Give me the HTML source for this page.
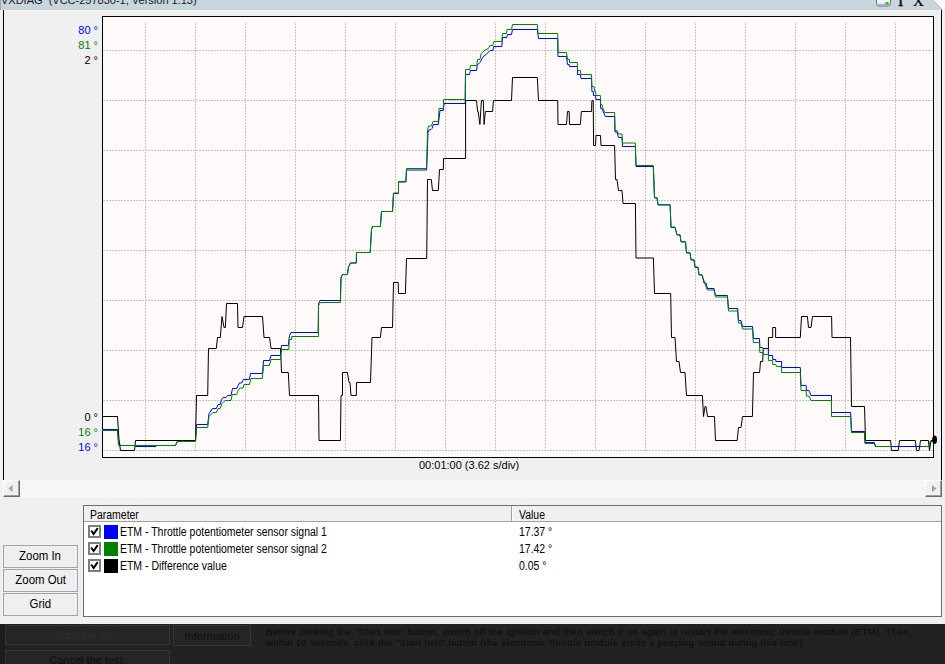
<!DOCTYPE html>
<html><head><meta charset="utf-8">
<style>
*{margin:0;padding:0;box-sizing:border-box}
html,body{width:945px;height:664px;overflow:hidden;background:#f0f0f0;font-family:"Liberation Sans",sans-serif;}
.a{position:absolute}
#title{left:0;top:0;width:945px;height:10px;background:#c9d5dd;overflow:hidden}
#title .t{position:absolute;left:1px;top:-5px;font-size:11px;line-height:11px;color:#1a1a1a;white-space:nowrap}
.lbl{position:absolute;font-size:11px;line-height:13px;white-space:nowrap;text-align:right;width:60px}
.btn{position:absolute;left:3px;width:75px;height:23px;border:1px solid #a3a3a3;background:#efefef;font-size:12px;line-height:21px;text-align:center;color:#000}
.btn span{display:inline-block;transform:scaleX(0.95)}
.tt{position:absolute;font-size:11px;line-height:13px;white-space:nowrap;color:#000}
.tb{position:absolute;font-size:12px;line-height:13px;white-space:nowrap;color:#000;transform:scaleX(0.872);transform-origin:0 0}
.cb{position:absolute;left:88px;width:13px;height:13px;border:2px solid #7e7e7e;background:#fff}
.sq{position:absolute;left:104px;width:14px;height:14px}
.dk{position:absolute;font-size:11px;white-space:nowrap}
</style></head><body>
<div id="title" class="a"><div class="a" style="left:0;top:0;width:1px;height:10px;background:#a8a8a8"></div><div class="t">VXDIAG &nbsp;(VCC-257830-1, Version 1.13)</div></div>
<svg class="a" style="left:0;top:0" width="945" height="14"><path d="M933 0 L945 0 L945 10 L943 10 Z" fill="#fdfdfd"/><path d="M933 0 L943 10" stroke="#a8a8a8" stroke-width="1" stroke-dasharray="1 0.5"/></svg>
<div class="a" style="left:3px;top:10px;width:1px;height:470px;background:#000"></div>
<div class="a" style="left:941px;top:10px;width:1px;height:470px;background:#000"></div>

<div class="lbl" style="left:38px;top:24px;color:#0000ff">80 °</div>
<div class="lbl" style="left:38px;top:39px;color:#008000">81 °</div>
<div class="lbl" style="left:38px;top:54px;color:#000">2 °</div>
<div class="lbl" style="left:38px;top:411px;color:#000">0 °</div>
<div class="lbl" style="left:38px;top:426px;color:#008000">16 °</div>
<div class="lbl" style="left:38px;top:441px;color:#0000ff">16 °</div>
<div class="tt" style="left:419px;top:459px">00:01:00 (3.62 s/div)</div>

<svg class="a" style="left:0;top:0" width="945" height="664" viewBox="0 0 945 664">
<rect x="102" y="16" width="832" height="442" fill="#fdfaf9"/>
<g stroke="#c4c4c4" stroke-width="1" stroke-dasharray="2 1" shape-rendering="crispEdges">
<line x1="103" y1="50.5" x2="933" y2="50.5"/>
<line x1="103" y1="100.5" x2="933" y2="100.5"/>
<line x1="103" y1="150.5" x2="933" y2="150.5"/>
<line x1="103" y1="200.5" x2="933" y2="200.5"/>
<line x1="103" y1="250.5" x2="933" y2="250.5"/>
<line x1="103" y1="300.5" x2="933" y2="300.5"/>
<line x1="103" y1="350.5" x2="933" y2="350.5"/>
<line x1="103" y1="400.5" x2="933" y2="400.5"/>
<line x1="103" y1="450.5" x2="933" y2="450.5"/>
<line x1="145.5" y1="23" x2="145.5" y2="451"/>
<line x1="195.5" y1="23" x2="195.5" y2="451"/>
<line x1="245.5" y1="23" x2="245.5" y2="451"/>
<line x1="295.5" y1="23" x2="295.5" y2="451"/>
<line x1="345.5" y1="23" x2="345.5" y2="451"/>
<line x1="395.5" y1="23" x2="395.5" y2="451"/>
<line x1="445.5" y1="23" x2="445.5" y2="451"/>
<line x1="495.5" y1="23" x2="495.5" y2="451"/>
<line x1="545.5" y1="23" x2="545.5" y2="451"/>
<line x1="595.5" y1="23" x2="595.5" y2="451"/>
<line x1="645.5" y1="23" x2="645.5" y2="451"/>
<line x1="695.5" y1="23" x2="695.5" y2="451"/>
<line x1="745.5" y1="23" x2="745.5" y2="451"/>
<line x1="795.5" y1="23" x2="795.5" y2="451"/>
<line x1="845.5" y1="23" x2="845.5" y2="451"/>
<line x1="895.5" y1="23" x2="895.5" y2="451"/>
</g>
<rect x="102.5" y="16.5" width="831" height="441" fill="none" stroke="#000" stroke-width="1" shape-rendering="crispEdges"/>
<g fill="none" stroke-width="1.0" stroke-linejoin="miter" stroke-miterlimit="2">
<polyline stroke="#0000ff" points="102,429.5 117.5,429.5 119,443 120.5,445.5 135,445.5 135.5,446.5 156,446.5 156.5,445.5 175.5,445.5 177,441.5 195.5,441.5 196.5,424.5 207.7,424.5 209,413.5 212.5,408.5 216.3,408.5 218,404.5 220.2,404.5 221.5,399.5 223,397.5 225.9,397.5 227.5,395.5 231,395.5 232.5,388.5 236.7,388.5 238,385.5 239.5,383 241.7,383 243.5,379.5 249.4,379.5 250.5,373.5 262.5,373.5 263.5,360.5 269.6,360.5 271,355.5 280.3,355.5 281.5,345.5 288.3,345.5 289.5,335.5 291,332.5 318.1,332.5 318.5,303.5 320,300.5 340.4,300.5 341,278 342.5,274.5 347.4,274.5 348.5,267 350.5,263 356.3,263 356.5,252.5 370.2,252.5 371.5,229.5 372.5,226.5 380.4,226.5 381.5,211.5 392.5,211.5 393.5,193.5 398.5,193.5 398.5,182 405.9,182 406.5,170 426.6,170 428,132.5 429,130 431,129.5 432,128.5 433.5,124.5 438.3,124.5 440,110.5 443.3,110.5 444,103.5 465.2,103.5 465.5,74.5 469.6,74.5 470.3,70.5 476.6,70.5 477.2,65 480.5,62 482,58.5 484,56 486.5,54 489.2,51.5 490.1,50.5 492.8,50.5 493.7,46.5 501.8,46.5 502.5,37.5 506.8,37.5 507.5,34.5 511.5,34.5 512.5,29.5 537.3,29.5 538.5,38.5 557.7,38.5 558,56.5 566.5,56.5 567.5,64.5 569.2,64.5 569.5,66.5 577.4,66.5 577.6,74.5 580.3,74.5 581,78.5 591.5,78.5 591.9,91.5 593.2,91.5 593.6,95.5 595.5,95.5 596,99.5 600.4,99.5 600.7,108.5 602,108.5 602.7,110.5 605.4,116.5 614.6,116.5 615,132 617,132 618.5,137.5 622,137.5 622.5,146.5 635.3,146.5 636,166.5 653.3,166.5 654.5,198 657,198 658,205 670.1,205 671,227.5 675,227.5 677,235 680,235 681,242 685.5,242 686.5,253 690,253 691,260 694,260 695,267.5 698,267.5 699,275 702,275 704,283 706,283 707.5,288.5 714,288.5 715.5,295.5 727.4,295.5 728.5,308.5 737.6,308.5 738.5,320.5 741,320.5 742.5,326.5 752.5,326.5 753.5,338.5 759.5,338.5 759.8,347.5 762.7,347.5 763.2,348.5 768.4,348.5 768.4,355.5 772.7,355.5 772.7,359.5 775.8,359.5 775.8,361.5 781.6,361.5 781.6,367.5 800.3,367.5 801,385.5 806.1,385.5 806.5,390.5 809,390.5 811,395.5 831.5,395.5 831.5,412.5 850.6,412.5 851.5,431.5 864.5,431.5 865,442.5 874.4,442.5 875.5,446.5 922,446.5"/>
<polyline stroke="#000" points="102,416.5 117.5,416.5 119,440 120.5,450.5 134.5,450.5 135.5,440.5 195.5,440.5 196.5,395.5 207.7,395.5 208.5,348.5 216.3,348.5 217.5,337.5 220.3,337.5 222,316.5 224,327.5 225.4,327.5 226.5,303.5 237.5,303.5 238,327.5 242.5,327.5 244,316.5 262.5,316.5 264,337.5 269.6,337.5 271,348.5 280.6,348.5 281.5,372.5 288.3,372.5 289.5,395.5 318.5,395.5 319,440.5 340.4,440.5 341,395.5 342.5,395.5 342.5,372.5 347.4,372.5 349,382.5 350,382.5 351,395.5 356.3,395.5 356.5,382.5 370.5,382.5 372,337.5 380.4,337.5 381.5,327.5 392.5,327.5 393.5,282.5 398.2,282.5 398.5,293.5 405.4,293.5 406.5,258.5 426.7,258.5 427.5,179.5 431.3,179.5 432.5,190.5 438.3,190.5 439.5,169.5 443.3,169.5 443.5,158.5 465.6,158.5 465.6,100.5 476.5,100.5 477.6,111.5 478.2,111.5 479.9,124.5 481.4,100.5 483.3,100.5 484.1,124.5 485.4,111.5 492.6,111.5 493.4,100.5 511.5,100.5 512.5,77.5 537.3,77.5 538.5,100.5 557.7,100.5 558,124.5 566.5,124.5 567.5,111.5 569.2,111.5 569.5,124.5 580.3,124.5 581.4,111.5 591.5,111.5 591.9,100.5 593.2,100.5 593.6,145.5 595.5,145.5 596,135.5 600.5,135.5 601,145.5 614.6,145.5 615.5,179.5 617,179.5 618.5,190.5 622,190.5 623,203.5 635.4,203.5 636,258 653.4,258 654.5,293.5 670.7,293.5 671.5,337.5 675,337.5 676.5,361.5 679,361.5 680.5,372.5 685,372.5 686.5,395.5 702.4,395.5 703.5,416.5 705,406.5 706,406.5 707.5,416.5 714.5,416.5 715.5,440.5 737.2,440.5 738.5,427.5 741,427.5 742.5,416.5 752.4,416.5 753.5,372.5 759.6,372.5 760.5,361.5 762.7,361.5 763.2,348.5 768.4,348.5 768.4,337.5 772.7,337.5 772.7,327.5 775.6,327.5 775.6,337.5 800.3,337.5 801.5,316.5 807.4,316.5 808.5,327.5 811,327.5 812.5,316.5 831.6,316.5 832,337.5 850.5,337.5 851.5,406.5 864.5,406.5 865.5,440.5 890.6,440.5 891.5,450.5 898.2,450.5 899.5,440.5 915.3,440.5 916.5,450.5 919,450.5 920.5,440.5 928.4,440.5 929.5,450.5 931,440.5 933,440.5"/>
<polyline stroke="#008000" points="102,430.5 117.5,430.5 118.5,445.5 175.5,445.5 177.5,441.5 195.5,441.5 196.5,427.5 207.7,427.5 209,416.5 213,412.5 216.3,412.5 218,408.5 220.2,408.5 222,403.5 224,401.5 225.5,400.5 231,400.5 232.2,394.5 236.7,394.5 238,390.5 240,388 243,388 244,384.5 249.4,384.5 251,378.5 262.3,378.5 263.5,365.5 269.4,365.5 271,359.5 280.3,359.5 281.5,349.5 288.8,349.5 289.2,339.5 291.7,339.5 291.7,336.5 318.5,336.5 318.5,305.5 320.5,302.5 340.4,302.5 341,277.5 342.5,274.5 347.4,274.5 348.5,267 350.5,263 356.3,263 356.5,252.5 370.2,252.5 371.5,229.5 372.5,226.5 380.4,226.5 381.5,211.5 392.5,211.5 393.5,193 398.5,193 398.5,181.5 405.9,181.5 406.5,168.5 426.6,168.5 427.5,131 428.5,126 431.5,126 433,121.5 438.3,121.5 439,108.5 443.3,108.5 443.5,99.5 465.2,99.5 465.5,69.5 469.6,69.5 470.6,65.5 476.6,65.5 477.6,59.5 479.9,59.5 481.2,53.5 483.2,52 484.8,50 488.5,48.5 489.8,45.5 492.8,45.5 493.7,41.5 501.8,41.5 502.5,33.5 506.5,33.5 507,29.5 511.5,29.5 512.5,24.5 537.3,24.5 538,33.5 557.7,33.5 558,52.5 566.5,52.5 567.5,59.5 569.5,59.5 569.5,62.5 577.4,62.5 577.6,70.5 580.3,70.5 581,74.5 591.5,74.5 591.9,86.5 594,86.5 594.6,91.5 595.5,91.5 596,95.5 600.4,95.5 600.7,104.5 602,104.5 602.7,107.8 604.7,112.5 614.6,112.5 615,130.5 617,130.5 618.5,134 622,134 622.5,143 635.3,143 636,165.5 653.3,165.5 654.5,197.5 657,197.5 658,204.5 670.1,204.5 671,227 675,227 677,234.5 680,234.5 681,241.5 685.5,241.5 686.5,252.5 690,252.5 691,259.5 694,259.5 695,267 698,267 699,274.5 702,274.5 705,284 707,289.5 708.5,290 714,290 715.5,297 727.4,297 728.5,311 737.6,311 738.5,323 741,323 742.5,329 752.5,329 753.3,342.5 759.5,342.5 759.8,352.5 763.2,352.5 763.2,354.5 768.4,354.5 768.4,360.5 772.7,360.5 772.7,364.5 775.8,364.5 776.5,366.5 781.5,366.5 781.5,372.5 800.3,372.5 801,390.5 806.1,390.5 806.5,396 809,396 811,400.5 831.5,400.5 831.5,416.5 850.6,416.5 851.5,432.5 864.5,432.5 865,443.5 874,443.5 875.5,446.5 928.7,446.5 930,441.5 933,441.5"/>
<polyline stroke="#0000ff" points="892.6,446.5 921.9,446.5"/>
</g>
<ellipse cx="934.6" cy="439.8" rx="2.4" ry="4.2" fill="#000"/>
</svg>

<!-- scrollbar -->
<div class="a" style="left:3px;top:480px;width:939px;height:17px;background:repeating-conic-gradient(#ffffff 0 25%,#efefef 0 50%) 0 0/2px 2px"></div>
<div class="a" style="left:3px;top:480px;width:17px;height:17px;background:#f0f0f0;border-top:1px solid #fff;border-left:1px solid #fff;border-right:1px solid #6a6a6a;border-bottom:1px solid #6a6a6a;box-shadow:inset -1px -1px 0 #a0a0a0"></div>
<div class="a" style="left:925px;top:480px;width:17px;height:17px;background:#f0f0f0;border-top:1px solid #fff;border-left:1px solid #fff;border-right:1px solid #6a6a6a;border-bottom:1px solid #6a6a6a;box-shadow:inset -1px -1px 0 #a0a0a0"></div>
<svg class="a" style="left:0;top:0" width="945" height="664"><path d="M8.5 488.5 L12.5 485 L12.5 492 Z" fill="#a0a0a0"/><path d="M936.5 488.5 L932 485 L932 492 Z" fill="#a0a0a0"/></svg>

<!-- buttons -->
<div class="btn" style="top:545px"><span>Zoom In</span></div>
<div class="btn" style="top:569px"><span>Zoom Out</span></div>
<div class="btn" style="top:593px"><span>Grid</span></div>

<!-- table -->
<div class="a" style="left:83px;top:505px;width:859px;height:112px;border:1px solid #6e6e6e;background:#fff"></div>
<div class="a" style="left:84px;top:506px;width:857px;height:16px;background:#f0f0f0;border-bottom:1px solid #a0a0a0"></div>
<div class="a" style="left:511px;top:506px;width:1px;height:15px;background:#a0a0a0"></div>
<div class="a" style="left:512px;top:506px;width:1px;height:15px;background:#fff"></div>
<div class="tb" style="left:90px;top:509px">Parameter</div>
<div class="tb" style="left:519px;top:509px">Value</div>

<div class="cb" style="top:525px"></div><div class="sq" style="top:525px;background:#0000ff"></div>
<div class="cb" style="top:542px"></div><div class="sq" style="top:542px;background:#008000"></div>
<div class="cb" style="top:559px"></div><div class="sq" style="top:559px;background:#000"></div>
<svg class="a" style="left:0;top:0" width="945" height="664" fill="none" stroke="#000" stroke-width="2">
<path d="M91.2 530.5 L93.6 534 L97.7 528.2"/>
<path d="M91.2 547.5 L93.6 551 L97.7 545.2"/>
<path d="M91.2 564.5 L93.6 568 L97.7 562.2"/>
</svg>
<div class="tb" style="left:120px;top:526px">ETM - Throttle potentiometer sensor signal 1</div>
<div class="tb" style="left:120px;top:543px">ETM - Throttle potentiometer sensor signal 2</div>
<div class="tb" style="left:120px;top:560px">ETM - Difference value</div>
<div class="tb" style="left:519px;top:526px">17.37 °</div>
<div class="tb" style="left:519px;top:543px">17.42 °</div>
<div class="tb" style="left:519px;top:560px">0.05 °</div>

<!-- dark footer -->
<div class="a" style="left:0;top:624px;width:945px;height:40px;background:#222222"></div>
<div class="a" style="left:0;top:624px;width:5px;height:40px;background:#1d1d1d"></div>
<div class="a" style="left:5px;top:625px;width:165px;height:20px;border:1px solid #353535;background:#252525"></div>
<div class="a" style="left:5px;top:650px;width:165px;height:20px;border:1px solid #353535;background:#252525"></div>
<div class="a" style="left:173px;top:625px;width:78px;height:21px;border:1px solid #353535;background:#252525"></div>
<div class="dk" style="left:5px;top:629px;width:165px;text-align:center;color:#2e2e2e">Start the test.</div>
<div class="dk" style="left:5px;top:654px;width:165px;text-align:center;color:#0e0e0e">Cancel the test.</div>
<div class="dk" style="left:173px;top:630px;width:78px;text-align:center;color:#0e0e0e">Information</div>
<div class="dk" style="left:266px;top:626px;font-size:9.5px;line-height:11px;letter-spacing:0.41px;color:#0a0a0a">Before clicking the "Start test" button, switch off the ignition and then switch it on again to restart the electronic throttle module (ETM). Then,<br>within 10 seconds, click the "Start test" button (the electronic throttle module emits a peeping sound during this time).</div>

<!-- top right icons -->
<svg class="a" style="left:0;top:0" width="945" height="14">
<rect x="876.5" y="-3.5" width="14" height="9.5" rx="2.5" fill="#e6eaee" stroke="#66707a" stroke-width="1"/>
<rect x="877" y="0" width="13" height="2" fill="#f8f9fa"/>
<rect x="877" y="4" width="13" height="1.5" fill="#a9b2ba"/>
<rect x="885.5" y="2" width="3" height="2.5" fill="#19c819"/>
</svg>
<div class="a" style="left:898px;top:-7px;font-family:'Liberation Serif',serif;font-size:16px;line-height:16px;color:#000;-webkit-text-stroke:0.3px #000">I</div>
<div class="a" style="left:913px;top:-7px;font-family:'Liberation Serif',serif;font-size:15px;line-height:16px;color:#000;-webkit-text-stroke:0.2px #000">X</div>
</body></html>
